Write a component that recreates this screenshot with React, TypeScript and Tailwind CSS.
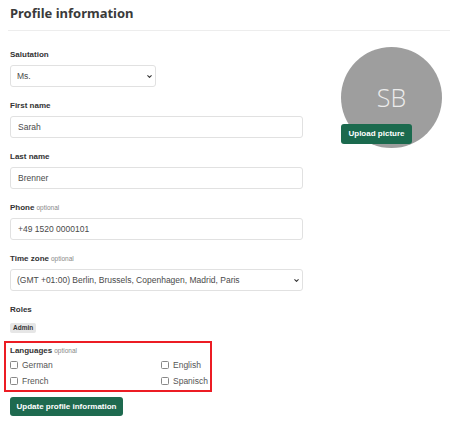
import { ChevronDown } from "lucide-react";

type FieldProps = {
  label: string;
  optional?: boolean;
  children: React.ReactNode;
};

const Field = ({ label, optional, children }: FieldProps) => (
  <div className="mb-[12px]">
    <div className="mb-[3px] text-[8px] font-bold leading-[14px] text-[#333]">
      {label}
      {optional && (
        <span className="ml-[2px] text-[6.5px] font-normal text-[#888]">
          optional
        </span>
      )}
    </div>
    {children}
  </div>
);

const TextInput = ({ value }: { value: string }) => (
  <input
    readOnly
    value={value}
    className="block h-[22px] w-full rounded-[3px] border border-[#e1e1e1] bg-white px-[7px] text-[8.5px] text-[#4a4a4a] outline-none"
  />
);

const Select = ({ value, className }: { value: string; className: string }) => (
  <div className={`relative ${className}`}>
    <select
      defaultValue={value}
      className="block h-[22px] w-full appearance-none rounded-[3px] border border-[#e1e1e1] bg-white pl-[6px] pr-[16px] text-[8.5px] text-[#4a4a4a] outline-none"
    >
      <option>{value}</option>
    </select>
    <ChevronDown
      className="pointer-events-none absolute right-[3px] top-[8px] h-[7px] w-[7px] text-[#333]"
      strokeWidth={3.5}
    />
  </div>
);

const Check = ({ label }: { label: string }) => (
  <label className="flex h-[16px] items-center gap-[4px] text-[8.5px] text-[#555]">
    <input
      type="checkbox"
      className="h-[8px] w-[8px] appearance-none rounded-[1.5px] border border-[#888] bg-white"
    />
    {label}
  </label>
);

export default function App() {
  return (
    <div className="w-[450px] bg-white font-['Liberation_Sans',Arial,sans-serif] text-[#444]">
      <div className="pl-[10px] pt-[3px]">
        <h1 className="font-['Noto_Sans',sans-serif] text-[13px] font-bold leading-[20px] text-[#3a3a3a]">
          Profile information
        </h1>
      </div>
      <div className="ml-[8px] mt-[7px] border-b border-[#ededed]" />

      <div className="flex items-start pl-[10px]">
        <form className="w-[293px] pt-[17px]">
          <Field label="Salutation">
            <Select value="Ms." className="w-[146px]" />
          </Field>
          <Field label="First name">
            <TextInput value="Sarah" />
          </Field>
          <Field label="Last name">
            <TextInput value="Brenner" />
          </Field>
          <Field label="Phone" optional>
            <TextInput value="+49 1520 0000101" />
          </Field>
          <Field label="Time zone" optional>
            <Select
              value="(GMT +01:00) Berlin, Brussels, Copenhagen, Madrid, Paris"
              className="w-full"
            />
          </Field>

          <div className="mb-[6px] text-[8px] font-bold leading-[14px] text-[#333]">
            Roles
          </div>
          <div className="h-[10px] w-fit rounded-[2px] bg-[#e6e6e6] px-[3px] text-[6.5px] font-bold leading-[10px] text-[#333]">
            Admin
          </div>

          <div className="-ml-[6px] mt-[8px] w-[208px] border-2 border-[#ec1c24] pb-[1px] pl-[4px] pt-[2px]">
            <div className="text-[8px] font-bold leading-[12px] text-[#333]">
              Languages
              <span className="ml-[2px] text-[6.5px] font-normal text-[#888]">
                optional
              </span>
            </div>
            <div className="grid grid-cols-[151px_1fr]">
              <Check label="German" />
              <Check label="English" />
              <Check label="French" />
              <Check label="Spanisch" />
            </div>
          </div>

          <button
            type="button"
            className="mt-[5px] block h-[19px] w-[113px] rounded-[3px] bg-[#1e6a4f] text-[8px] font-bold text-white"
          >
            Update profile information
          </button>
        </form>

        <div className="relative ml-[38px] mt-[16px] h-[101px] w-[101px]">
          <div className="flex h-full w-full items-center justify-center rounded-full bg-[#9e9e9e]">
            <span className="font-['Open_Sans',sans-serif] text-[25px] font-light leading-none text-[#ececec]">
              SB
            </span>
          </div>
          <button
            type="button"
            className="absolute left-0 top-[77px] h-[20px] w-[71px] rounded-[3px] bg-[#1b6a4e] text-[8px] font-bold text-white"
          >
            Upload picture
          </button>
        </div>
      </div>
    </div>
  );
}
